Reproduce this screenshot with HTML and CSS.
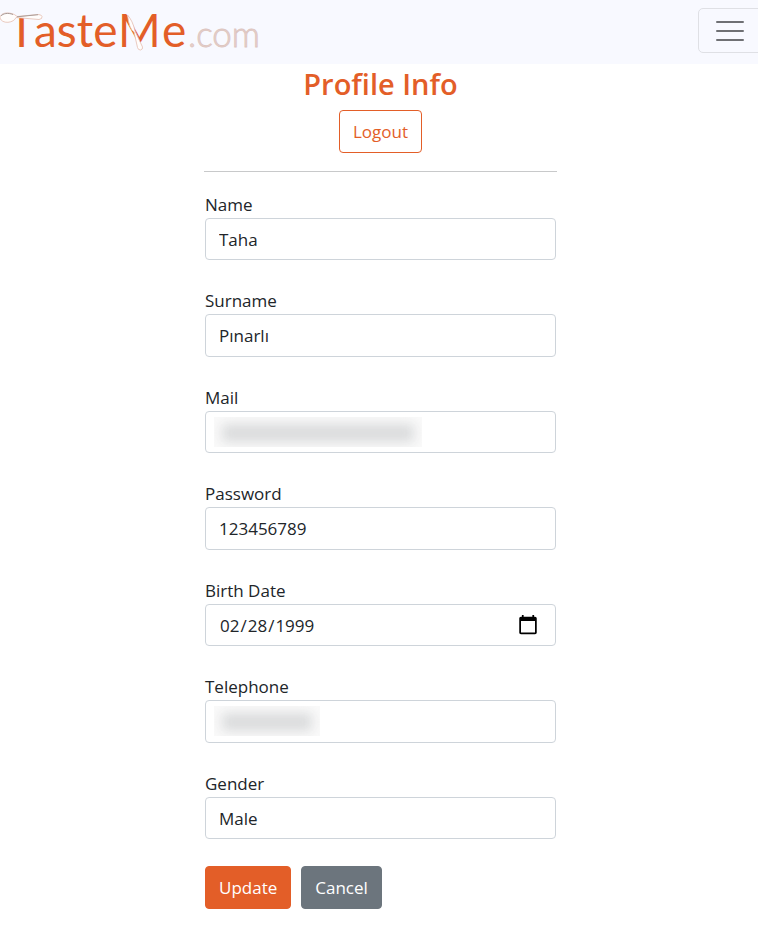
FILE: index.html
```html
<!DOCTYPE html>
<html lang="en">
<head>
<meta charset="utf-8">
<meta name="viewport" content="width=device-width, initial-scale=1">
<title>TasteMe.com - Profile Info</title>
<link rel="stylesheet" href="styles.css">
</head>
<body>
<header class="navbar">
  <a class="brand" href="#" aria-label="TasteMe.com">
    <svg class="logo" width="270" height="64" viewBox="0 0 270 64">
      <g class="logo-main">
        <text x="8" y="47">T</text>
        <text x="34" y="47">aste</text>
        <text x="118" y="47">M</text>
        <text x="162" y="47">e</text>
      </g>
      <text class="logo-suffix" x="188" y="47">.com</text>
      <path class="mask" d="M6 11H41V18H6Z"/>
      <path class="spoon" d="M16 17.500L39 19.500Q42.500 19 42 16.500Q41.500 14.500 38 14.500L17 16.500C14 13.500 10 12.800 6 13C2 13.500 0 15.500 0 18C1 21 4 22.500 8 22.300C12 22 15 20 16 17.500Z"/>
      <path class="handle" d="M17 16.800L38 14.700M1 16C3 13.500 8 12.500 13 14.500"/>
      <path class="spoon" d="M127.500 15C131 19 133.500 24 135 31L142.500 47Q143 49.500 140.500 50Q138 50 137.500 47.500L134 32Q129 29 127.500 15Z"/>
    </svg>
  </a>
  <button class="toggler" type="button" aria-label="Toggle navigation">
    <svg width="28" height="28" viewBox="0 0 28 28"><path d="M1 5H27M1 14H27M1 23H27"/></svg>
  </button>
</header>
<main class="profile">
  <div class="heading">
    <h1>Profile Info</h1>
    <button class="btn btn-outline" type="button">Logout</button>
  </div>
  <hr>
  <form>
    <div class="field"><label for="name">Name</label><input id="name" type="text" value="Taha"></div>
    <div class="field"><label for="surname">Surname</label><input id="surname" type="text" value="Pınarlı"></div>
    <div class="field"><label for="mail">Mail</label>
      <div class="private"><input id="mail" type="email"><span class="redacted redacted-mail"></span></div></div>
    <div class="field"><label for="password">Password</label><input id="password" type="text" value="123456789"></div>
    <div class="field"><label for="birth">Birth Date</label><input id="birth" type="date" value="1999-02-28"></div>
    <div class="field"><label for="phone">Telephone</label>
      <div class="private"><input id="phone" type="tel"><span class="redacted redacted-phone"></span></div></div>
    <div class="field"><label for="gender">Gender</label><input id="gender" type="text" value="Male"></div>
    <div class="actions">
      <button class="btn btn-primary" type="submit">Update</button>
      <button class="btn btn-secondary" type="button">Cancel</button>
    </div>
  </form>
</main>
</body>
</html>
```
FILE: styles.css
```css
* { box-sizing: border-box; }

body {
  margin: 0;
  background: #fff;
  color: #212529;
  font: 17px/27px "Open Sans", "Noto Sans", sans-serif;
}

.navbar {
  display: flex;
  align-items: flex-start;
  justify-content: space-between;
  height: 64px;
  overflow: hidden;
  background: #f8f9ff;
}

.brand { display: block; }
.logo { display: block; }
.logo-main { fill: #e35e28; font: 46px Lato, sans-serif; }
.logo-suffix { fill: #e8d0ca; stroke: #dcc5c0; stroke-width: 0.8; font: 300 35px Lato, sans-serif; }
.mask { fill: #f8f9ff; }
.spoon { fill: #fffdfc; stroke: #e5bcae; stroke-width: 0.8; }
.handle { fill: none; stroke: #aa9d99; stroke-width: 1; }

.toggler {
  display: flex;
  align-items: center;
  justify-content: center;
  width: 66px;
  height: 45px;
  margin: 8px -6px 0 0;
  padding: 0 2px 0 0;
  border: 1px solid #dfe0e5;
  border-radius: 5px;
  background: transparent;
}
.toggler path { stroke: #6f7074; stroke-width: 2; stroke-linecap: round; }

.profile {
  width: 356px;
  max-width: 100%;
  margin: 0 auto;
  padding-left: 3px;
}

.heading {
  display: flex;
  flex-direction: column;
  align-items: center;
}

h1 {
  margin: 0 0 6px;
  color: #e35e28;
  font-size: 29px;
  font-weight: 600;
  line-height: 40px;
}

hr {
  margin: 18px 0;
  border: 0;
  border-top: 1px solid #c8c9ca;
}

form { padding: 1px 1px 0; }

.field {
  display: flex;
  flex-direction: column;
  margin-bottom: 27px;
}

input {
  display: block;
  width: 100%;
  height: 42px;
  padding: 0 16px 0 13px;
  border: 1px solid #ced4da;
  border-radius: 4px;
  background: #fff;
  color: #212529;
  font: inherit;
}
.field:nth-child(even) input { height: 43px; }

input::-webkit-calendar-picker-indicator {
  width: 22px;
  height: 22px;
  padding: 0;
}

.private { position: relative; }

.redacted {
  position: absolute;
  top: 6px;
  left: 9px;
  height: 30px;
  overflow: hidden;
  background: #fafafa;
}
.redacted::before {
  content: "";
  position: absolute;
  inset: 7px 8px 5px;
  background: #dadbdc;
  filter: blur(6px);
}
.redacted-mail { width: 208px; }
.redacted-phone { width: 106px; }

.actions { display: flex; gap: 10px; }

.btn {
  height: 43px;
  padding: 0 13px;
  border: 1px solid #e35e28;
  border-radius: 4px;
  font: inherit;
}
.btn-outline { background: transparent; color: #e35e28; }
.btn-primary { background: #e35e28; color: #fff; }
.btn-secondary { border-color: #6c757d; background: #6c757d; color: #fff; }
```
